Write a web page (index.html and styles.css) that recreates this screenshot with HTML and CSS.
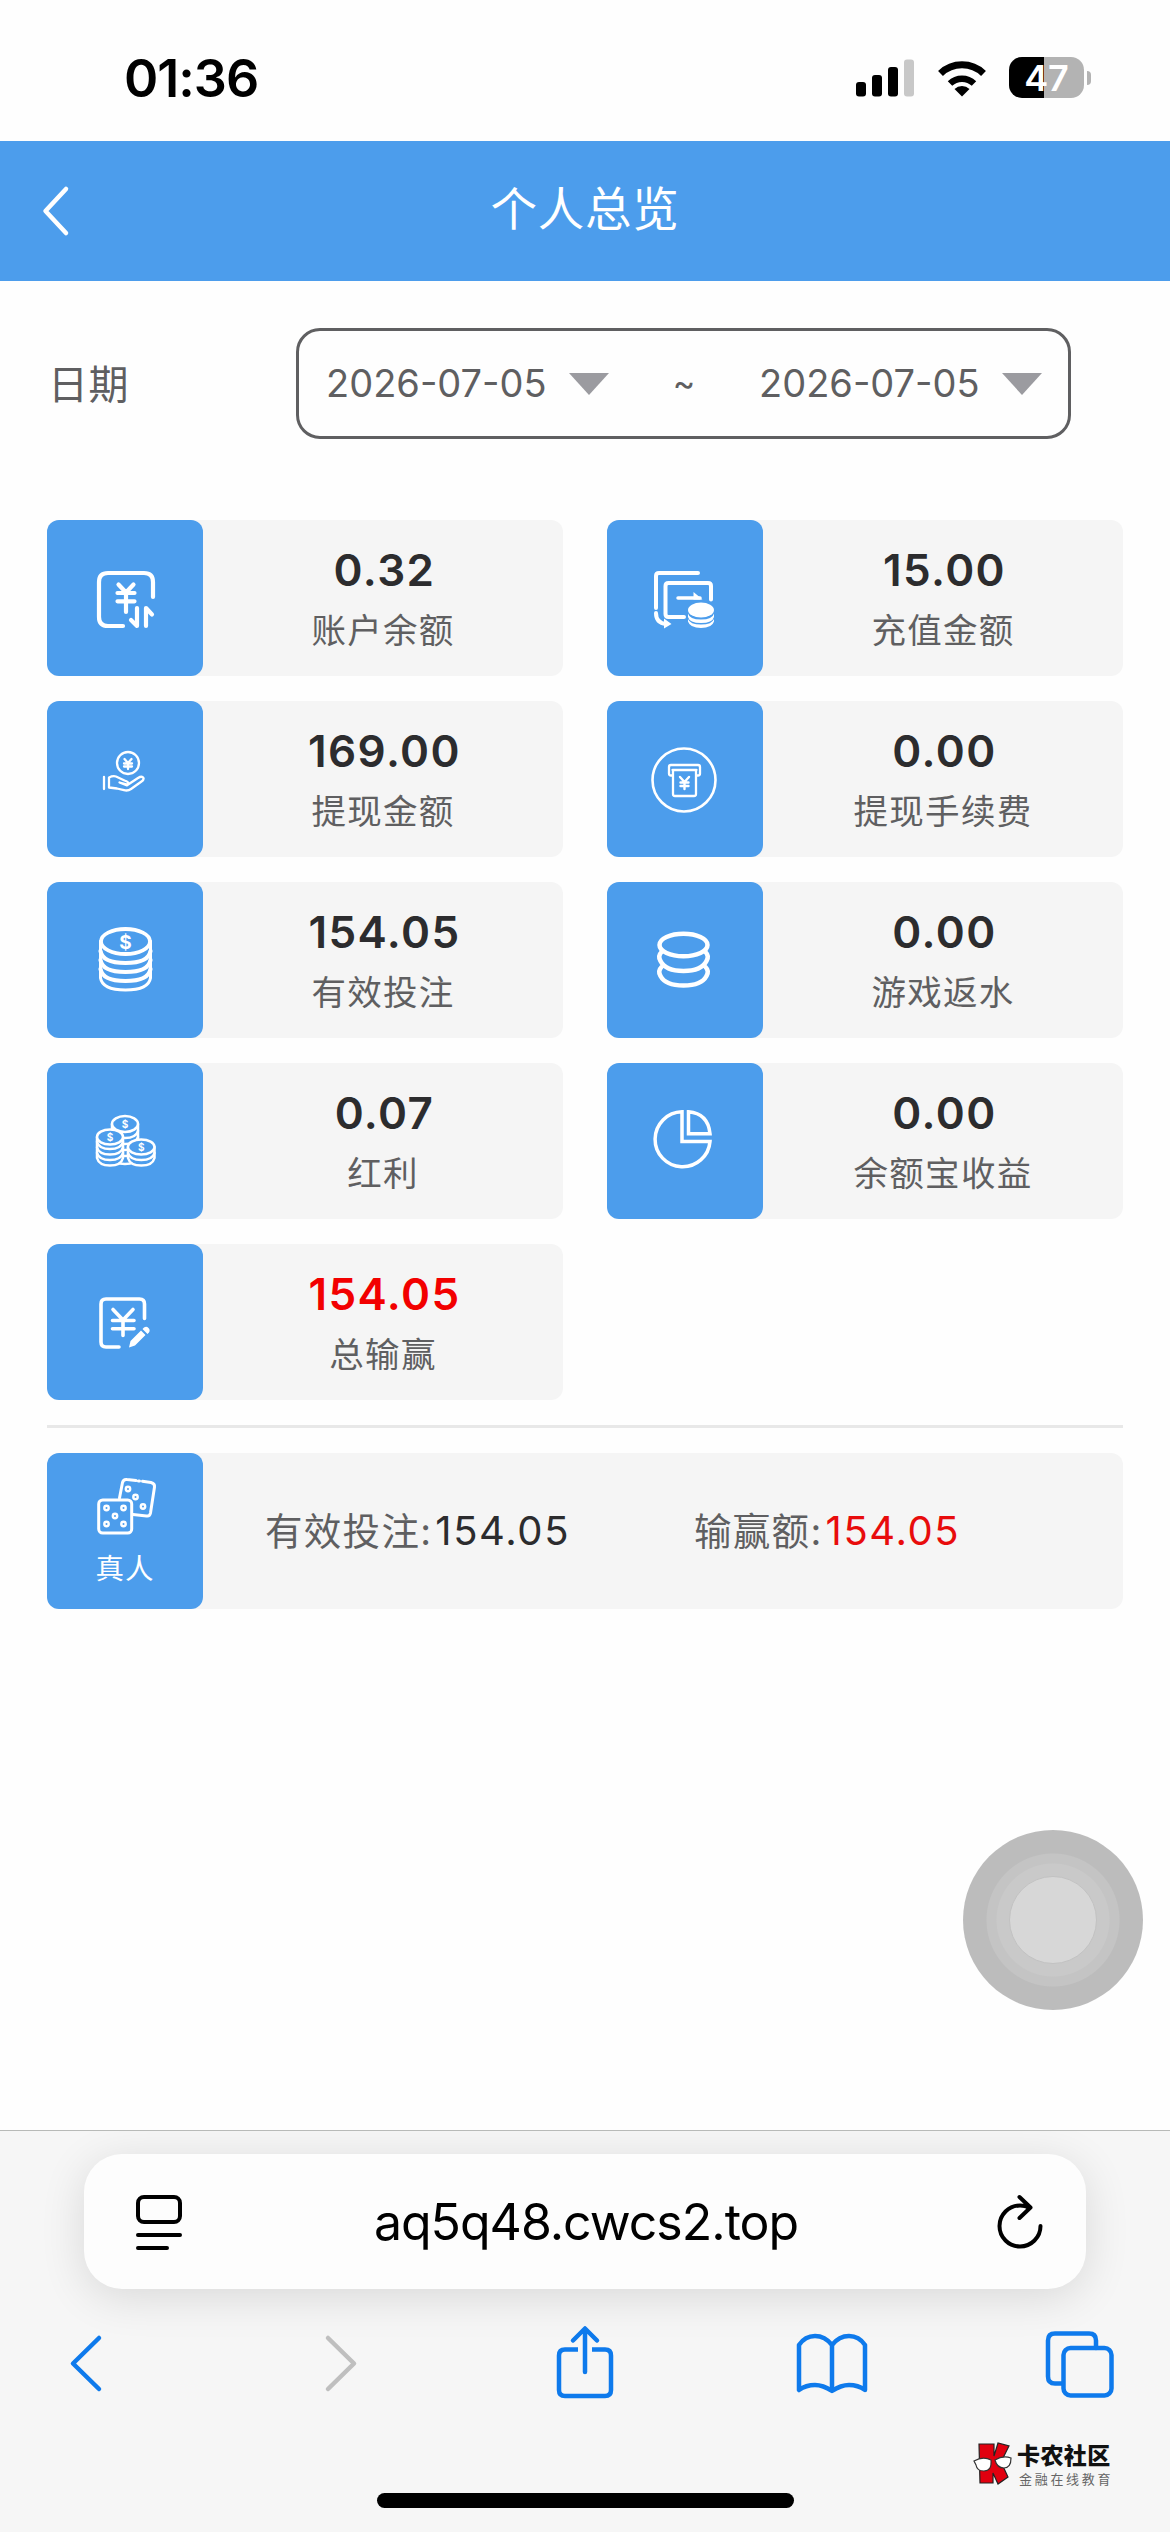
FILE: index.html
```html
<!DOCTYPE html>
<html lang="zh-CN">
<head>
<meta charset="utf-8">
<title>个人总览</title>
<link rel="stylesheet" href="styles.css">
</head>
<body>
<div class="screen">
  <div class="status">
    <span class="clock">01:36</span>
    <div class="indicators">
      <svg class="signal" width="58" height="38" viewBox="0 0 58 38"><rect y="23" width="10" height="14.500" rx="3"/><rect x="16" y="16" width="10" height="21.500" rx="3"/><rect x="32" y="8" width="10" height="29.500" rx="3"/><rect x="48" y="0.500" width="10" height="37" rx="3" fill="#c8c8c8"/></svg>
      <svg class="wifi" width="50" height="38" viewBox="0 0 50 38"><path d="M25 37.500L17.500 30a11 11 0 0 1 15 0z"/><path d="M13 24.500a17.500 17.500 0 0 1 24 0" fill="none" stroke="#000" stroke-width="6.500"/><path d="M3.500 14.500a31 31 0 0 1 43 0" fill="none" stroke="#000" stroke-width="7"/></svg>
      <div class="battery"><span>47</span></div><i class="nub"></i>
    </div>
  </div>

  <header class="titlebar">
    <svg class="back" width="30" height="52" viewBox="0 0 30 52"><path d="M26 4L5.500 26 26 48"/></svg>
    <h1>个人总览</h1>
  </header>

  <main class="content">
    <div class="filter">
      <span class="filter-label">日期</span>
      <div class="range">
        <span class="date">2026-07-05</span><i class="caret"></i>
        <span class="tilde">~</span>
        <span class="date">2026-07-05</span><i class="caret"></i>
      </div>
    </div>

    <section class="cards">
      <div class="card">
        <div class="tile"><svg viewBox="0 0 156 156" stroke-width="4.200"><path d="M106 77V62q0-9-9-9H61q-9 0-9 9V97q0 9 9 9H76M71.500 64.500l7.500 8 7.500-8M70.500 73h17M70.500 81.300h17M79 73V92M90 88V106l-6-6M99 106V88l6 6.500"/></svg></div>
        <div class="info"><b>0.32</b><span>账户余额</span></div>
      </div>
      <div class="card">
        <div class="tile"><svg viewBox="0 0 156 156" stroke-width="4" stroke-linecap="butt"><path d="M91 53H52q-3 0-3 3V88M104 79.500V66q0-3-3-3H61.500q-3 0-3 3V94q0 3 3 3H77"/><path d="M71 78H93" stroke-width="3.500" stroke-linecap="round"/><path d="M49 93q0 10 10 11" /><g class="solid"><path d="M86.500 72l9 7.500h-9zM57 98.500l7.500 5.500-7.500 4.500z"/><ellipse cx="94" cy="90" rx="13" ry="7.500"/><path d="M81 93.500q1.500 6 13 6t13-6v3.500q-1.500 6-13 6t-13-6zM81 99q2 5.500 13 5.500T107 99v2.500q-2 6.500-13 6.500t-13-6.500z"/></g></svg></div>
        <div class="info"><b>15.00</b><span>充值金额</span></div>
      </div>
      <div class="card">
        <div class="tile"><svg viewBox="0 0 156 156" stroke-width="2.300"><circle cx="81" cy="62" r="11"/><path d="M77.500 58l3.500 4 3.500-4M77 62.500h8M77 65.500h8M81 62V68M57 76V88M62 86.500V76.500q4-2 7-1l8.500 4q4 1 4 3.500l-1 .5-8-2 7.500 2.800 11-7.300q4-2.500 5.500 0 .5 2-2 3.500L84 88q-3 2.200-7 1.200l-7-1.700z"/></svg></div>
        <div class="info"><b>169.00</b><span>提现金额</span></div>
      </div>
      <div class="card">
        <div class="tile"><svg viewBox="0 0 156 156" stroke-width="2.600"><circle cx="77" cy="79" r="31.500"/><path d="M66 74.500h-2q-2 0-2-2V66q0-2 2-2H91q2 0 2 2v6.500q0 2-2 2h-2M65.500 69H89.500M66 69.500V93q0 2 2 2H87q2 0 2-2V69.500" stroke-width="2.300"/><path d="M73 76l4.500 5 4.500-5M73.500 81.500h8M73.500 85h8M77.500 81V88" stroke-width="2.400"/></svg></div>
        <div class="info"><b>0.00</b><span>提现手续费</span></div>
      </div>
      <div class="card">
        <div class="tile"><svg viewBox="0 0 156 156" stroke-width="3.800"><ellipse cx="78.500" cy="59.500" rx="24.500" ry="12.500"/><path d="M53.500 59V96q2 12 25 12t25-12V59" stroke-width="3"/><path d="M53.500 69q2 12 25 12t25-12M53.500 78q2 12 25 12t25-12M53.500 87q2 12 25 12t25-12" stroke-width="4.200"/><text x="78.500" y="66.500" font-size="19">$</text></svg></div>
        <div class="info"><b>154.05</b><span>有效投注</span></div>
      </div>
      <div class="card">
        <div class="tile"><svg viewBox="0 0 156 156" stroke-width="4.500"><ellipse cx="76.500" cy="63" rx="24" ry="11.200"/><path d="M54.500 70q-4 4-1 9 5 10 23 10t23-10q3-5-1-9M54.500 85q-4 4-1 9 5 9.500 23 9.500t23-9.500q3-5-1-9"/></svg></div>
        <div class="info"><b>0.00</b><span>游戏返水</span></div>
      </div>
      <div class="card">
        <div class="tile"><svg viewBox="0 0 156 156" stroke-width="2.500"><path d="M65 61V94q2 7 13 7t13-7V61"/><path d="M65 68q2 7 13 7t13-7M65 74q2 7 13 7t13-7M65 80q2 7 13 7t13-7M65 86q2 7 13 7t13-7"/><ellipse cx="78" cy="61" rx="13" ry="8" class="cover"/><path class="cover" d="M50 74V95q2 7.500 13 7.500T76 95V74"/><path d="M50 79q2 7 13 7t13-7M50 84.500q2 7 13 7t13-7M50 90q2 7 13 7t13-7"/><ellipse class="cover" cx="63" cy="74" rx="13" ry="7.500"/><path class="cover" d="M81 84V95q2 7.500 13.300 7.500T107.500 95V84"/><path d="M81 90q2 7 13.300 7T107.500 90"/><ellipse class="cover" cx="94.200" cy="84" rx="13.300" ry="7.500"/><text x="78" y="64.700" font-size="10">$</text><text x="63" y="77.700" font-size="10">$</text><text x="94.300" y="87.700" font-size="10">$</text></svg></div>
        <div class="info"><b>0.07</b><span>红利</span></div>
      </div>
      <div class="card">
        <div class="tile"><svg class="sharp" viewBox="0 0 156 156" stroke-width="3.500"><path d="M75 48.800A27.500 27.500 0 1 0 103 78.500H75zM81.500 48.800V70.700H103Q101 50.500 81.500 48.800z"/></svg></div>
        <div class="info"><b>0.00</b><span>余额宝收益</span></div>
      </div>
      <div class="card">
        <div class="tile"><svg viewBox="0 0 156 156" stroke-width="3.600"><path d="M97.500 74.500V60q0-5-5-5H59q-5 0-5 5V98q0 5 5 5H72M66 65.500L76 76l10-10.500M65.500 76.500H87M65.500 84.700H87M76 76V91.500"/><path class="solid" d="M82 103.500l1.500-6.500 10.500-10.500 4.500 4.500L88 101.500zM95.500 85l1.500-1.500q2.500-1.500 4.500.5t.5 4.500L100.500 90z"/></svg></div>
        <div class="info loss"><b>154.05</b><span>总输赢</span></div>
      </div>
    </section>

    <section class="live">
      <div class="tile">
        <svg viewBox="0 0 156 92" stroke-width="3"><path d="M72.500 45l3-15.500q1-3.500 4.500-3L89 27.500M91.500 28h1M95.500 28.300l8.500 1.200q4 1 3.500 4.500l-4 26q-.7 3.500-4 3L86 61.500"/><rect x="51.700" y="47" width="33" height="33" rx="4"/><g stroke-width="2.400"><circle cx="59.500" cy="55" r="2.200"/><circle cx="76.500" cy="55" r="2.200"/><circle cx="68" cy="63" r="2.200"/><circle cx="59.500" cy="71" r="2.200"/><circle cx="76.500" cy="71" r="2.200"/><circle cx="81" cy="36" r="2.200"/><circle cx="88.500" cy="44" r="2.200"/><circle cx="96" cy="53.500" r="2.200"/></g></svg>
        <span>真人</span>
      </div>
      <p class="stat first">有效投注:<em>154.05</em></p>
      <p class="stat loss">输赢额:<em>154.05</em></p>
    </section>
  </main>

  <div class="assist"><i></i></div>

  <footer class="browser">
    <div class="address">
      <svg width="46" height="56" viewBox="0 0 46 56" class="line"><rect x="2" y="3" width="42" height="25" rx="6"/><path d="M2 41H44M2 54H31"/></svg>
      <span>aq5q48.cwcs2.top</span>
      <svg width="46" height="56" viewBox="0 0 46 56" class="line"><path d="M32 13.500Q28 11.500 23 11.500A20.500 20.500 0 1 0 43.500 32M22.500 3L33.500 13.500 22.500 24"/></svg>
    </div>
    <nav class="tools">
      <svg width="68" height="76" viewBox="0 0 68 76"><path d="M30 13L4 38.500 30 64"/></svg>
      <svg width="68" height="76" viewBox="0 0 68 76" class="off"><path d="M4 13l26 25.500L4 64"/></svg>
      <svg width="68" height="76" viewBox="0 0 68 76"><path d="M27 24.500H14q-6 0-6 6V65q0 6 6 6H54q6 0 6-6V30.500q0-6-6-6H41" stroke-linecap="butt"/><path d="M34 47V4M22 15.500L34 3.500 46 15.500"/></svg>
      <svg width="74" height="76" viewBox="0 0 74 76"><path d="M37 66Q28 60 20 60 11 60 4 65V20Q10 11 20 11 30 11 37 20 44 11 54 11 64 11 70 20V65Q63 60 54 60 46 60 37 66zM37 20V65"/></svg>
      <svg width="70" height="76" viewBox="0 0 70 76"><path d="M17 58.500H10q-7 0-7-7V15.500q0-7 7-7H44q7 0 7 7V23"/><rect x="18.500" y="23" width="48" height="47.500" rx="7"/></svg>
    </nav>
    <div class="home"></div>
    <div class="brand">
      <svg width="40" height="44" viewBox="0 0 40 44"><path d="M6 2H21V14L25 1 36 4 28 20 35 35 25 42 20 31V41H7z" fill="#e1000f" stroke="#222" stroke-width="1.200"/><path d="M1 19Q10 14 18 18 19 29 11 29 4 29 3 23zM22 18Q30 13 38 16 38 26 31 26 24 26 22 18z" fill="#fff" stroke="#333" stroke-width="1.200"/></svg>
      <div class="brand-text"><strong>卡农社区</strong><small>金融在线教育</small></div>
    </div>
  </footer>
</div>
</body>
</html>
```
FILE: styles.css
```css
* { box-sizing: border-box; margin: 0; }
body {
  background: #fff;
  font-family: Inter, "Noto Sans CJK SC", sans-serif;
  color: #5f5f61;
}
.screen {
  position: relative;
  display: flex;
  flex-direction: column;
  width: 1170px;
  height: 2532px;
  overflow: hidden;
  background: #fefefe;
}
svg { display: block; flex: none; }

.status {
  display: flex;
  justify-content: space-between;
  height: 141px;
  padding: 57px 79px 0 124px;
  color: #000;
}
.clock { font-size: 52px; font-weight: 600; line-height: 43px; letter-spacing: -1px; }
.indicators { display: flex; align-items: flex-start; }
.signal, .wifi { margin-top: 2px; }
.wifi { margin-left: 23px; }
.battery {
  width: 75px;
  height: 41px;
  margin-left: 22px;
  border-radius: 13px;
  background: linear-gradient(90deg, #000 35px, #b3b3b3 35px);
  color: #fff;
  font-size: 36px;
  font-weight: 600;
  line-height: 42px;
  text-align: center;
}
.nub { width: 4px; height: 14px; margin: 14px 0 0 3px; border-radius: 0 4px 4px 0; background: #b3b3b3; }

.titlebar {
  display: flex;
  align-items: center;
  height: 140px;
  padding: 0 40px;
  background: #4c9dec;
  color: #fff;
}
.titlebar h1 { flex: 1; padding: 0 30px 4px 0; text-align: center; font-size: 46.5px; font-weight: 400; letter-spacing: 0.8px; line-height: 60px; }
.back path { fill: none; stroke: #fff; stroke-width: 4.5; stroke-linecap: round; stroke-linejoin: round; }

.content { padding: 47px 47px 0; }
.filter { display: flex; align-items: center; height: 111px; margin-bottom: 81px; }
.filter-label { width: 249px; padding: 0 0 4px 1px; font-size: 40px; letter-spacing: 0.5px; }
.range {
  display: flex;
  align-items: center;
  width: 775px;
  height: 111px;
  padding-left: 27px;
  border: 3px solid #5f5f61;
  border-radius: 24px;
  font-size: 38px;
}
.date { width: 219px; padding-bottom: 2px; white-space: nowrap; }
.caret { margin-left: 24px; border: solid transparent; border-width: 22px 20px 0; border-top-color: #9b9ba0; }
.tilde { width: 150px; padding-bottom: 2px; text-align: center; font-size: 34px; }

.cards { display: grid; grid-template-columns: 516px 516px; gap: 25px 44px; }
.card, .live { display: flex; height: 156px; border-radius: 12px; background: #f5f5f5; }
.tile { flex: none; width: 156px; height: 156px; border-radius: 12px; background: #4c9dec; color: #fff; text-align: center; }
.tile svg { width: 156px; fill: none; stroke: #fff; stroke-linecap: round; stroke-linejoin: round; }
.tile .sharp { stroke-linecap: butt; stroke-linejoin: miter; }
.tile .solid { fill: #fff; stroke: none; }
.tile .cover { fill: #4c9dec; }
.tile text { fill: #fff; stroke: none; font-weight: 700; text-anchor: middle; }
.info { flex: 1; padding-top: 24px; text-align: center; }
.info b { display: block; padding-left: 3px; font-size: 44px; font-weight: 600; line-height: 52px; letter-spacing: 1.4px; color: #2c2c2e; }
.info span { display: block; margin-top: 10px; font-size: 34.5px; line-height: 50px; letter-spacing: 1.3px; }
.info.loss b { color: #f20000; }

.live { position: relative; align-items: center; margin-top: 53px; }
.live::before { content: ""; position: absolute; top: -28px; left: 0; right: 0; height: 3px; background: #e8e8e8; }
.live .tile span { display: block; margin-top: 3px; font-size: 28.5px; line-height: 42px; letter-spacing: 1px; }
.stat { width: 429px; padding-bottom: 6px; font-size: 37.5px; letter-spacing: 1.3px; white-space: nowrap; }
.stat.first { margin-left: 62px; }
.stat em { margin-left: 3px; font-size: 40px; font-style: normal; color: #2c2c2e; letter-spacing: 1.6px; }
.stat.loss em { color: #e80c0c; }

.assist {
  position: absolute;
  left: 963px;
  top: 1830px;
  display: grid;
  place-items: center;
  width: 180px;
  height: 180px;
  border-radius: 50%;
  background: radial-gradient(circle, #c9c9c9 56px, #c4c4c4 57px, #c4c4c4 66px, #bcbcbc 67px);
}
.assist i { width: 88px; height: 88px; border: 1px solid #c2c2c2; border-radius: 50%; background: #d7d7d7; }

.browser {
  position: relative;
  height: 402px;
  margin-top: auto;
  padding-top: 23px;
  overflow: hidden;
  border-top: 1px solid #b8bab8;
  background: #f6f6f6;
}
.address {
  display: flex;
  align-items: center;
  justify-content: space-between;
  width: 1002px;
  height: 135px;
  margin: 0 auto;
  padding: 0 43px 0 52px;
  border-radius: 38px;
  background: #fdfdfd;
  box-shadow: 0 8px 45px rgba(0, 0, 0, 0.12);
  color: #000;
  font-size: 50px;
}
.address span { margin-right: 7px; letter-spacing: -1px; }
.line { fill: none; stroke: #000; stroke-width: 4; stroke-linecap: round; stroke-linejoin: round; }
.tools { display: grid; grid-template-columns: 255px 227px 244px 250px 70px; margin: 36px 0 0 69px; }
.tools svg { fill: none; stroke: #0e7aec; stroke-width: 4.5; stroke-linecap: round; stroke-linejoin: round; }
.tools .off { stroke: #bfbfbf; }
.home { width: 417px; height: 15px; margin: 92px auto 0; border-radius: 8px; background: #000; }
.brand { position: absolute; left: 973px; top: 311px; display: flex; gap: 4px; }
.brand-text { display: flex; flex-direction: column; white-space: nowrap; }
.brand strong { color: #111; font-size: 23px; font-weight: 900; line-height: 29px; letter-spacing: 0.4px; }
.brand small { color: #666; font-size: 13px; line-height: 17px; letter-spacing: 2.7px; padding-left: 2px; }
```
